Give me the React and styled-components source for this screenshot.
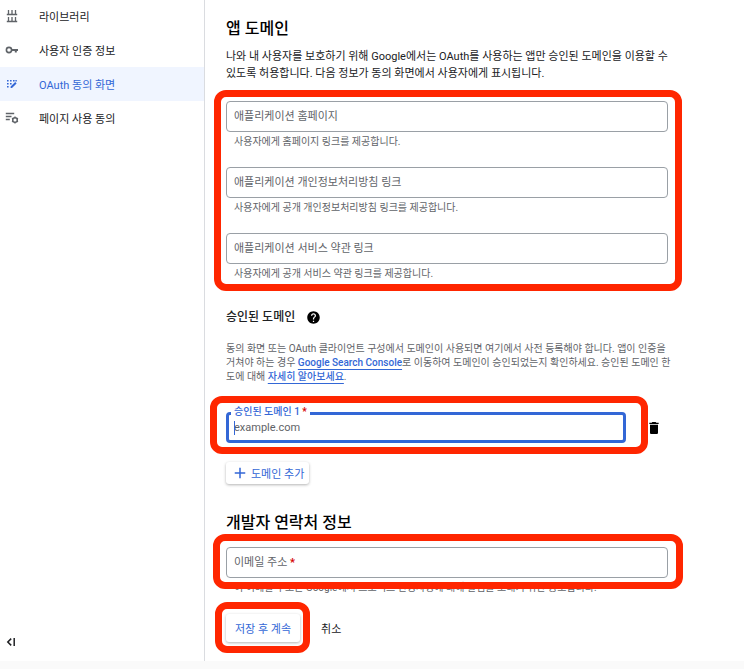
import React, { useState } from 'react'
import { styled, createGlobalStyle } from 'styled-components'
import { MdAdd, MdDelete, MdHelp } from 'react-icons/md'

const GlobalStyle = createGlobalStyle`
	* {
		box-sizing: border-box;
	}
	body {
		margin: 0;
		background: #fafafa;
		color: #202124;
		font-family: Roboto, 'Noto Sans CJK KR', sans-serif;
		font-size: 11px;
	}
	button, input {
		font-family: inherit;
		font-size: inherit;
	}
`
const StyledPage = styled.div`
	display: flex;
	background: #fff;
`
const StyledSidebar = styled.nav`
	flex: 0 0 205px;
	display: flex;
	flex-direction: column;
	justify-content: space-between;
	border-right: 1px solid #dadce0;
`
const StyledMenu = styled.ul`
	list-style: none;
	margin: -1px 0 0;
	padding: 0;
`
const StyledMenuLink = styled.a`
	display: flex;
	align-items: center;
	gap: 20px;
	height: 34px;
	padding: 0 0 1px 5px;
	background: ${props => props.$selected ? '#f0f5ff' : 'transparent'};
	color: ${props => props.$selected ? '#3367d6' : '#202124'};
	text-decoration: none;
	svg {
		color: ${props => props.$selected ? '#3367d6' : '#5f6368'};
	}
`
const StyledCollapse = styled.button`
	align-self: flex-start;
	display: flex;
	margin: 0 0 13px 5px;
	padding: 0;
	border: none;
	background: transparent;
`
const StyledMain = styled.main`
	flex: 1;
	min-width: 0;
	padding: 17px 21px 19px;
`
const StyledHeading = styled.h2`
	margin: ${props => props.$spaced ? '27px 0 12px' : '0 0 7px'};
	color: #000;
	font-size: 16px;
	font-weight: 500;
	line-height: 24px;
`
const StyledIntro = styled.p`
	margin: 0 0 19px;
	line-height: 17px;
`
const StyledSubheading = styled.h3`
	display: flex;
	align-items: center;
	gap: 11px;
	margin: 27px 0 16px;
	font-size: 12px;
	font-weight: 500;
	line-height: 18px;
`
const StyledDescription = styled.p`
	margin: 0 0 28px;
	color: #5f6368;
	font-size: 10px;
	line-height: 14px;
`
const StyledLink = styled.a`
	color: #3367d6;
	font-weight: 500;
	text-underline-offset: 3px;
`
const StyledGroup = styled.div`
	position: relative;
	display: flex;
	flex-direction: column;
	gap: 18px;
	max-width: 442px;
`
const StyledMark = styled.div`
	position: absolute;
	inset: ${props => props.$inset};
	border: 7px solid #ff2600;
	border-radius: 12px;
	pointer-events: none;
`
const StyledField = styled.div`
	position: relative;
`
const StyledLabel = styled.label`
	position: absolute;
	top: ${props => props.$floating ? '-7px' : '1px'};
	left: ${props => props.$floating ? '5px' : '8px'};
	padding: ${props => props.$floating ? '0 3px' : '0'};
	background: #fff;
	color: ${props => props.$floating ? '#3367d6' : '#5f6368'};
	font-size: ${props => props.$floating ? '10px' : '11px'};
	font-weight: ${props => props.$floating ? '500' : '400'};
	line-height: ${props => props.$floating ? '14px' : '29px'};
`
const StyledRequired = styled.span`
	color: #d50000;
	font-weight: 700;
`
const StyledInput = styled.input`
	display: block;
	width: 100%;
	height: 31px;
	padding: 0 ${props => props.$active ? '5px' : '8px'};
	border: ${props => props.$active ? '3px solid #3367d6' : '1px solid #9aa0a6'};
	border-radius: 4px;
	background: #fff;
	outline: none;
	&::placeholder {
		color: #5f6368;
		opacity: 1;
	}
`
const StyledCaret = styled.span`
	position: absolute;
	top: 9px;
	left: 8px;
	width: 1px;
	height: 14px;
	background: #3367d6;
`
const StyledHelper = styled.div`
	margin-top: 3px;
	padding-left: 8px;
	color: #5f6368;
	font-size: 10px;
	line-height: 14px;
`
const StyledDomainRow = styled.div`
	display: flex;
	align-items: center;
	gap: 20px;
`
const StyledDomainGroup = styled(StyledGroup)`
	flex: 0 1 400px;
`
const StyledIconButton = styled.button`
	display: flex;
	padding: 0;
	border: none;
	background: transparent;
	color: #000;
`
const StyledButton = styled.button`
	display: flex;
	align-items: center;
	gap: 2px;
	height: ${props => props.$small ? '22px' : '28px'};
	margin-top: ${props => props.$small ? '19px' : '0'};
	padding: ${props => props.$small ? '0 5px' : '0 9px'};
	border: none;
	border-radius: 3px;
	background: ${props => props.$plain ? 'transparent' : '#fff'};
	box-shadow: ${props => props.$plain ? 'none' : '0 1px 3px rgba(0, 0, 0, 0.3)'};
	color: ${props => props.$plain ? '#202124' : '#3367d6'};
	white-space: nowrap;
`
const StyledActions = styled.div`
	display: flex;
	align-items: center;
	gap: 12px;
	margin-top: 19px;
`

const LibraryIcon = () => (
	<svg width='14' height='14' viewBox='0 0 14 14' fill='none' stroke='currentColor' strokeWidth='1.3'>
		<path d='M3.5 1v4.6M7 1v4.6M10.5 1v4.6M1.8 5.5h10.4M3.5 8v4.6M7 8v4.6M10.5 8v4.6M1.8 12.5h10.4' />
	</svg>
)

const KeyIcon = () => (
	<svg width='14' height='14' viewBox='0 0 14 14' fill='none' stroke='currentColor' strokeWidth='1.6'>
		<circle cx='4' cy='7' r='2.6' />
		<path d='M6.6 6.9H13M10.8 6.9v2.6' strokeWidth='2' />
	</svg>
)

const ConsentIcon = () => (
	<svg width='14' height='14' viewBox='0 0 14 14' fill='currentColor'>
		<path d='M2 3h1.6v1.6H2zM5 3h1.6v1.6H5zM8 3h1.6v1.6H8zM2 6h1.6v1.6H2zM5 6h1.6v1.6H5zM2 9h1.6v1.6H2z' />
		<path d='M5.6 11V9.600l4.600-4.600 1.400 1.400L7 11zM10.400 3h1.400v1.400h-1.400z' />
	</svg>
)

const AgreementIcon = () => (
	<svg width='14' height='14' viewBox='0 0 14 14' fill='none' stroke='currentColor' strokeWidth='1.3'>
		<path d='M.8 2.5h8.400M.8 5.500h5.700M.8 8.500h4' />
		<circle cx='10' cy='9' r='2.300' strokeWidth='1.500' />
		<path d='M10 5.500v1.400M10 11.100v1.400M7 7.200l1.200.7M11.800 10.100l1.200.7M7 10.800l1.200-.7M11.800 7.900l1.200-.7' />
	</svg>
)

const CollapseIcon = () => (
	<svg width='12' height='12' viewBox='0 0 12 12' fill='none' stroke='#202124' strokeWidth='1.5'>
		<path d='M6.2 2.6L2.8 6l3.4 3.4M9.2 2v8' />
	</svg>
)

const menu = [
	{ id: 'library', name: '라이브러리', icon: <LibraryIcon /> },
	{ id: 'credentials', name: '사용자 인증 정보', icon: <KeyIcon /> },
	{ id: 'consent', name: 'OAuth 동의 화면', icon: <ConsentIcon /> },
	{ id: 'agreement', name: '페이지 사용 동의', icon: <AgreementIcon /> },
]

const links = [
	{ id: 'home', label: '애플리케이션 홈페이지', helper: '사용자에게 홈페이지 링크를 제공합니다.' },
	{ id: 'privacy', label: '애플리케이션 개인정보처리방침 링크', helper: '사용자에게 공개 개인정보처리방침 링크를 제공합니다.' },
	{ id: 'terms', label: '애플리케이션 서비스 약관 링크', helper: '사용자에게 공개 서비스 약관 링크를 제공합니다.' },
]

const Field = ({ id, label, helper, required, type = 'text' }) => {
	const [value, setValue] = useState('')
	return (
		<StyledField>
			<StyledInput id={id} type={type} value={value} onChange={(e) => setValue(e.target.value)} />
			{!value && (
				<StyledLabel htmlFor={id}>{label}{required && <StyledRequired> *</StyledRequired>}</StyledLabel>
			)}
			{helper && <StyledHelper>{helper}</StyledHelper>}
		</StyledField>
	)
}

const Sidebar = () => {
	const [selected, setSelected] = useState('consent')
	return (
		<StyledSidebar>
			<StyledMenu>
				{menu.map(item => (
					<li key={item.id}>
						<StyledMenuLink href={'#' + item.id} $selected={selected === item.id} onClick={() => setSelected(item.id)}>
							{item.icon}
							{item.name}
						</StyledMenuLink>
					</li>
				))}
			</StyledMenu>
			<StyledCollapse type='button' aria-label='메뉴 접기'><CollapseIcon /></StyledCollapse>
		</StyledSidebar>
	)
}

const App = () => {
	const [domain, setDomain] = useState('')
	return (
		<StyledPage>
			<GlobalStyle />
			<Sidebar />
			<StyledMain>
				<StyledHeading>앱 도메인</StyledHeading>
				<StyledIntro>
					나와 내 사용자를 보호하기 위해 Google에서는 OAuth를 사용하는 앱만 승인된 도메인을 이용할 수<br />
					있도록 허용합니다. 다음 정보가 동의 화면에서 사용자에게 표시됩니다.
				</StyledIntro>
				<StyledGroup>
					{links.map(link => <Field key={link.id} {...link} />)}
					<StyledMark $inset='-11px -14px -10px -12px' />
				</StyledGroup>

				<StyledSubheading>승인된 도메인 <MdHelp size={15} color='#000' /></StyledSubheading>
				<StyledDescription>
					동의 화면 또는 OAuth 클라이언트 구성에서 도메인이 사용되면 여기에서 사전 등록해야 합니다. 앱이 인증을<br />
					거쳐야 하는 경우 <StyledLink href='#search-console'>Google Search Console</StyledLink>로 이동하여 도메인이 승인되었는지 확인하세요. 승인된 도메인 한<br />
					도에 대해 <StyledLink href='#learn-more'>자세히 알아보세요</StyledLink>.
				</StyledDescription>
				<StyledDomainRow>
					<StyledDomainGroup>
						<StyledField>
							<StyledInput id='domain' $active placeholder='example.com' value={domain} onChange={(e) => setDomain(e.target.value)} />
							<StyledLabel htmlFor='domain' $floating>승인된 도메인 1<StyledRequired> *</StyledRequired></StyledLabel>
							{!domain && <StyledCaret />}
						</StyledField>
						<StyledMark $inset='-16px -22px -11px -16px' />
					</StyledDomainGroup>
					<StyledIconButton type='button' aria-label='삭제'><MdDelete size={16} /></StyledIconButton>
				</StyledDomainRow>
				<StyledButton type='button' $small><MdAdd size={18} />도메인 추가</StyledButton>

				<StyledHeading $spaced>개발자 연락처 정보</StyledHeading>
				<StyledGroup>
					<Field
						id='email'
						type='email'
						label='이메일 주소'
						required
						helper='이 이메일 주소는 Google에서 프로젝트 변경사항에 대해 알림을 보내기 위한 용도입니다.'
					/>
					<StyledMark $inset='-13px -15px 6px -13px' />
				</StyledGroup>

				<StyledActions>
					<StyledGroup>
						<StyledButton type='button'>저장 후 계속</StyledButton>
						<StyledMark $inset='-12px -10px -11px -11px' />
					</StyledGroup>
					<StyledButton type='button' $plain>취소</StyledButton>
				</StyledActions>
			</StyledMain>
		</StyledPage>
	)
}

export default App
